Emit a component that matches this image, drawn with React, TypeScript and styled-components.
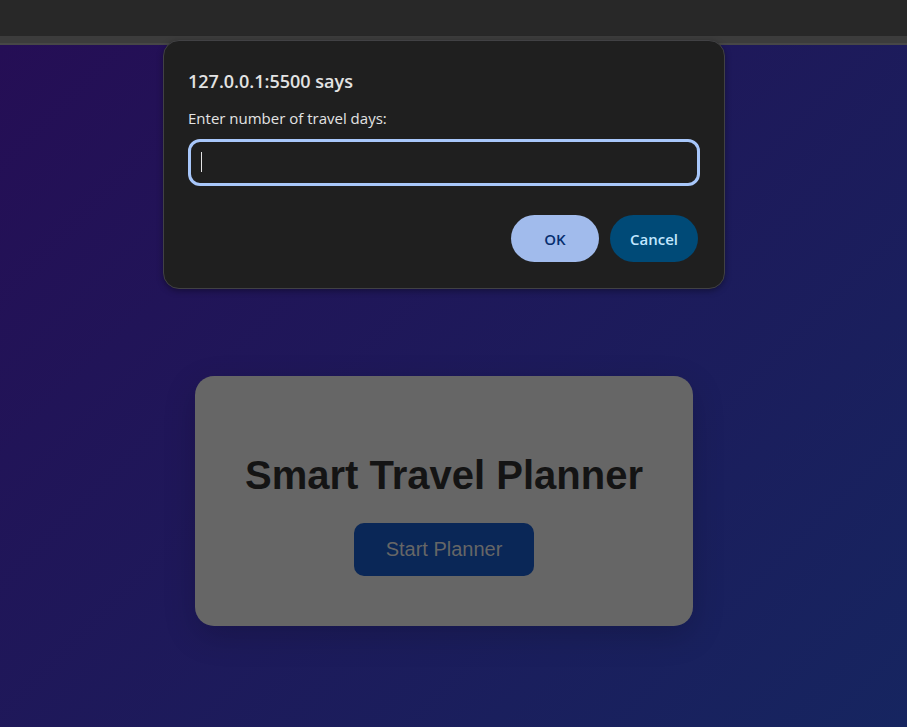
import React from "react";
import styled, { createGlobalStyle } from "styled-components";

const GlobalStyle = createGlobalStyle`
  * { box-sizing: border-box; }
  body { margin: 0; font-family: "Liberation Sans", Arial, sans-serif; }
`;

const Screen = styled.div`
  position: relative;
  min-height: 100vh;
  display: flex;
  flex-direction: column;
`;

const BrowserBar = styled.header`
  height: 45px;
  background: #3c3c3c;
  border-top: 36px solid #282828;
  border-bottom: 2px solid #474747;
`;

const Page = styled.main`
  flex: 1;
  display: flex;
  justify-content: center;
  align-items: flex-start;
  padding: 331px 19px 40px 0;
  background: linear-gradient(135deg, rgb(37, 14, 85), rgb(22, 37, 96));
`;

const PlannerCard = styled.section`
  display: flex;
  flex-direction: column;
  align-items: center;
  gap: 24px;
  padding: 76px 50px 50px;
  border-radius: 19px;
  background: #666;
  box-shadow: 0 10px 32px rgba(0, 0, 0, 0.18);
`;

const PlannerTitle = styled.h1`
  margin: 0;
  font-size: 40px;
  line-height: 47px;
  font-weight: 700;
  color: #141414;
`;

const StartButton = styled.button`
  height: 53px;
  padding: 0 32px;
  border: 0;
  border-radius: 10px;
  background: #0a2757;
  color: #666;
  font: 20px "Liberation Sans", Arial, sans-serif;
`;

const PromptLayer = styled.div`
  position: absolute;
  inset: 40px 19px auto 0;
  display: flex;
  justify-content: center;
`;

const PromptDialog = styled.form`
  width: 562px;
  max-width: 100%;
  padding: 26px 24px;
  border: 1px solid #414144;
  border-radius: 16px;
  background: #1f1f1f;
  box-shadow: 0 2px 6px rgba(0, 0, 0, 0.35);
  color: #e3e3e3;
  font-family: "Segoe UI", "Open Sans", "Noto Sans", sans-serif;
`;

const PromptTitle = styled.h2`
  margin: 0 0 10px;
  font-size: 18px;
  line-height: 28px;
  font-weight: 600;
`;

const PromptLabel = styled.label`
  display: block;
  margin-bottom: 8px;
  font-size: 15px;
  line-height: 26px;
`;

const PromptField = styled.div`
  position: relative;
`;

const PromptInput = styled.input`
  display: block;
  width: 100%;
  height: 47px;
  padding: 0 10px;
  border: 3px solid #a8c7fa;
  border-radius: 12px;
  outline: none;
  background: transparent;
  color: #e3e3e3;
  caret-color: transparent;
  font: 15px "Segoe UI", "Open Sans", sans-serif;
`;

const Caret = styled.span`
  position: absolute;
  top: 13px;
  left: 13px;
  width: 1px;
  height: 20px;
  background: #e3e3e3;
  pointer-events: none;
`;

const Actions = styled.div`
  display: flex;
  justify-content: flex-end;
  gap: 11px;
  padding: 29px 2px 0 0;
`;

const ActionButton = styled.button<{ $primary?: boolean }>`
  width: 88px;
  height: 47px;
  padding: 0;
  border: 0;
  border-radius: 24px;
  background: ${(p) => (p.$primary ? "#a1bbec" : "#004a77")};
  color: ${(p) => (p.$primary ? "#062e6f" : "#c2e7ff")};
  font: 600 15px "Segoe UI", "Open Sans", sans-serif;
`;

export default function App() {
  const [days, setDays] = React.useState("");

  return (
    <>
      <GlobalStyle />
      <Screen>
        <BrowserBar />
        <Page>
          <PlannerCard>
            <PlannerTitle>Smart Travel Planner</PlannerTitle>
            <StartButton type="button">Start Planner</StartButton>
          </PlannerCard>
        </Page>
        <PromptLayer>
          <PromptDialog
            role="dialog"
            aria-labelledby="prompt-title"
            onSubmit={(e) => e.preventDefault()}
          >
            <PromptTitle id="prompt-title">127.0.0.1:5500 says</PromptTitle>
            <PromptLabel htmlFor="travel-days">Enter number of travel days:</PromptLabel>
            <PromptField>
              <PromptInput
                id="travel-days"
                type="text"
                autoComplete="off"
                autoFocus
                value={days}
                onChange={(e) => setDays(e.target.value)}
              />
              {days === "" && <Caret aria-hidden="true" />}
            </PromptField>
            <Actions>
              <ActionButton type="submit" $primary>OK</ActionButton>
              <ActionButton type="button">Cancel</ActionButton>
            </Actions>
          </PromptDialog>
        </PromptLayer>
      </Screen>
    </>
  );
}
